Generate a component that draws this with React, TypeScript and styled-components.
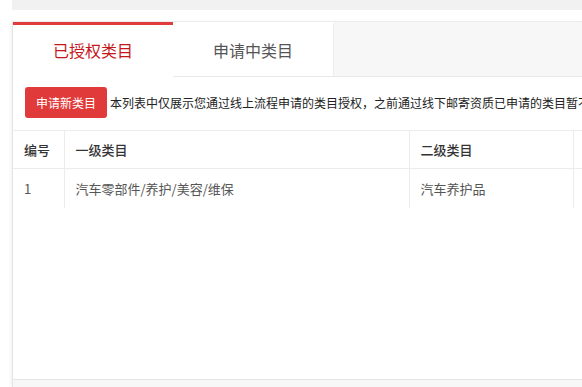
import styled, { createGlobalStyle } from 'styled-components';

const GlobalStyle = createGlobalStyle`
  html, body {
    margin: 0;
    padding: 0;
    background: #fff;
    overflow: hidden;
  }
  body {
    font-family: "Noto Sans CJK SC", "Microsoft YaHei", sans-serif;
    color: #333;
  }
`;

const Page = styled.div`
  height: 387px;
  padding-left: 12px;
  display: flex;
  flex-direction: column;
  box-sizing: border-box;
`;

const TopBar = styled.div`
  height: 10px;
  background: #f1f1f1;
  margin-bottom: 11px;
`;

const Card = styled.div`
  flex: 1;
  display: flex;
  flex-direction: column;
  border-left: 1px solid #e4e4e4;
  border-top: 1px solid #ececec;
  box-shadow: -2px 0 2px rgba(0, 0, 0, 0.04);
  min-width: 0;
`;

const TabBar = styled.div`
  display: flex;
  height: 54px;
  background: #f7f7f7;
  border-bottom: 1px solid #e8e8e8;
`;

const Tab = styled.div<{ $active?: boolean }>`
  width: ${(p) => (p.$active ? '160px' : '161px')};
  box-sizing: border-box;
  display: flex;
  align-items: center;
  justify-content: center;
  font-size: 16px;
  background: #fff;
  border-right: ${(p) => (p.$active ? 'none' : '1px solid #ececec')};
  border-top: 3px solid ${(p) => (p.$active ? '#e23b3b' : 'transparent')};
  color: ${(p) => (p.$active ? '#c5161d' : '#555')};
  margin-bottom: ${(p) => (p.$active ? '-1px' : '0')};
  padding-bottom: 2px;
`;

const Body = styled.div`
  flex: 1;
  display: flex;
  flex-direction: column;
  overflow: hidden;
`;

const Toolbar = styled.div`
  display: flex;
  align-items: center;
  padding: 10px 12px 11px;
  white-space: nowrap;
`;

const Button = styled.button`
  flex: none;
  height: 31px;
  width: 82px;
  border: none;
  border-radius: 3px;
  background: #e13a3a;
  color: #fff;
  font-family: inherit;
  font-size: 12px;
  padding: 0;
  margin-right: 3px;
`;

const Notice = styled.span`
  font-size: 12px;
  color: #222;
`;

const Table = styled.table`
  border-collapse: collapse;
  width: 640px;
  table-layout: fixed;
  font-size: 13px;
  flex: none;
  margin-top: 1px;
`;

const Th = styled.th<{ $w: number }>`
  width: ${(p) => p.$w}px;
  height: 38px;
  box-sizing: border-box;
  text-align: left;
  font-weight: 500;
  color: #333;
  padding: 0 11px;
  border-top: 1px solid #ececec;
  border-bottom: 1px solid #ececec;
  border-left: 1px solid #ececec;
  &:first-child {
    border-left: none;
  }
`;

const Td = styled.td`
  height: 39px;
  color: #555;
  padding: 0 11px;
  border-left: 1px solid #ececec;
  &:first-child {
    border-left: none;
  }
`;

const Footer = styled.div`
  height: 7px;
  background: #f7f7f7;
  border-top: 1px solid #e6e6e6;
`;

const columns = [
  { title: '编号', w: 51 },
  { title: '一级类目', w: 345 },
  { title: '二级类目', w: 164 },
  { title: '', w: 80 },
];

const rows = [['1', '汽车零部件/养护/美容/维保', '汽车养护品', '']];

export default function App() {
  return (
    <>
      <GlobalStyle />
      <Page>
        <TopBar />
        <Card>
          <TabBar>
            <Tab $active>已授权类目</Tab>
            <Tab>申请中类目</Tab>
          </TabBar>
          <Body>
            <Toolbar>
              <Button>申请新类目</Button>
              <Notice>
                本列表中仅展示您通过线上流程申请的类目授权，之前通过线下邮寄资质已申请的类目暂不在此展示
              </Notice>
            </Toolbar>
            <Table>
              <thead>
                <tr>
                  {columns.map((c) => (
                    <Th key={c.title || 'op'} $w={c.w}>
                      {c.title}
                    </Th>
                  ))}
                </tr>
              </thead>
              <tbody>
                {rows.map((r, i) => (
                  <tr key={i}>
                    {r.map((cell, j) => (
                      <Td key={j}>{cell}</Td>
                    ))}
                  </tr>
                ))}
              </tbody>
            </Table>
          </Body>
          <Footer />
        </Card>
      </Page>
    </>
  );
}
